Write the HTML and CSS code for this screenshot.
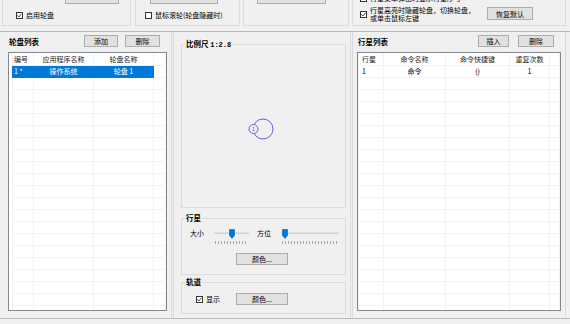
FILE: index.html
```html
<!DOCTYPE html>
<html lang="zh-CN">
<head>
  <meta charset="UTF-8">
  <title>轮盘设置</title>
  <link rel="stylesheet" href="styles.css">
</head>
<body>
  <div class="top">
    <div class="tgrp ga">
      <div class="tbtn"></div>
      <label class="chk">
        <svg class="cb" viewBox="0 0 7 7"><rect x=".5" y=".5" width="6" height="6" fill="#fff" stroke="#333"/><path d="M1.4 3.4l1.5 1.6 2.6-3.2" fill="none" stroke="#333" stroke-width=".9"/></svg>
        启用轮盘
      </label>
    </div>
    <div class="tgrp gb">
      <div class="tbtn"></div>
      <label class="chk">
        <svg class="cb" viewBox="0 0 7 7"><rect x=".5" y=".5" width="6" height="6" fill="#fff" stroke="#333"/></svg>
        鼠标滚轮(轮盘隐藏时)
      </label>
    </div>
    <div class="tgrp gc">
      <div class="tbtn"></div>
    </div>
    <div class="tgrp gd">
      <div class="gd-col">
        <label class="chk cut">
          <svg class="cb" viewBox="0 0 7 7"><rect x=".5" y=".5" width="6" height="6" fill="#fff" stroke="#333"/></svg>
          行星菜单弹出时显示行星序号
        </label>
        <label class="chk two">
          <svg class="cb" viewBox="0 0 7 7"><rect x=".5" y=".5" width="6" height="6" fill="#fff" stroke="#333"/><path d="M1.4 3.4l1.5 1.6 2.6-3.2" fill="none" stroke="#333" stroke-width=".9"/></svg>
          <span>行星高亮时隐藏轮盘，切换轮盘，<br>或单击鼠标左键</span>
        </label>
      </div>
      <button class="btn reset">恢复默认</button>
    </div>
  </div>

  <div class="main">
    <section class="pane left">
      <div class="phead">
        <span class="ptitle">轮盘列表</span>
        <button class="btn add">添加</button>
        <button class="btn del">删除</button>
      </div>
      <div class="list list-l">
        <table>
          <colgroup><col class="c24"><col class="c60"><col class="c60"><col></colgroup>
          <tr class="hd"><td class="l">编号</td><td>应用程序名称</td><td>轮盘名称</td><td></td></tr>
          <tr class="sel"><td class="l">1 *</td><td>操作系统</td><td>轮盘 1</td><td class="nosel"></td></tr>
          <tr><td></td><td></td><td></td><td></td></tr>
          <tr><td></td><td></td><td></td><td></td></tr>
          <tr><td></td><td></td><td></td><td></td></tr>
          <tr><td></td><td></td><td></td><td></td></tr>
          <tr><td></td><td></td><td></td><td></td></tr>
          <tr><td></td><td></td><td></td><td></td></tr>
          <tr><td></td><td></td><td></td><td></td></tr>
          <tr><td></td><td></td><td></td><td></td></tr>
          <tr><td></td><td></td><td></td><td></td></tr>
          <tr><td></td><td></td><td></td><td></td></tr>
          <tr><td></td><td></td><td></td><td></td></tr>
          <tr><td></td><td></td><td></td><td></td></tr>
          <tr><td></td><td></td><td></td><td></td></tr>
          <tr><td></td><td></td><td></td><td></td></tr>
          <tr><td></td><td></td><td></td><td></td></tr>
          <tr><td></td><td></td><td></td><td></td></tr>
          <tr><td></td><td></td><td></td><td></td></tr>
          <tr><td></td><td></td><td></td><td></td></tr>
          <tr><td></td><td></td><td></td><td></td></tr>
          <tr><td></td><td></td><td></td><td></td></tr>
        </table>
      </div>
    </section>

    <div class="split"></div>

    <section class="pane mid">
      <fieldset class="fs-scale">
        <legend>比例尺 <span class="num">1:2.8</span></legend>
        <svg class="canvas" viewBox="0 0 163 157">
          <circle cx="81" cy="80" r="10" fill="none" stroke="#6a5ee0" stroke-width="1"/>
          <circle cx="71.5" cy="80" r="4.5" fill="#f0f0f0" stroke="#6a5ee0" stroke-width="1"/>
          <text x="71.5" y="82.2" font-size="6" text-anchor="middle" fill="#6a5ee0" font-family="Liberation Sans, sans-serif">1</text>
        </svg>
      </fieldset>

      <fieldset class="fs-planet">
        <legend>行星</legend>
        <div class="srow">
          <span class="slabel">大小</span>
          <div class="slider s-size">
            <div class="track"></div>
            <div class="ticks"></div>
            <svg class="thumb t-size" viewBox="0 0 6 10"><path d="M.5 .5h5v6l-2.5 3-2.5-3z" fill="#0078d7" stroke="#0063b1" stroke-width=".6"/></svg>
          </div>
          <span class="slabel gap">方位</span>
          <div class="slider s-dir">
            <div class="track"></div>
            <div class="ticks"></div>
            <svg class="thumb t-dir" viewBox="0 0 6 10"><path d="M.5 .5h5v6l-2.5 3-2.5-3z" fill="#0078d7" stroke="#0063b1" stroke-width=".6"/></svg>
          </div>
        </div>
        <button class="btn color">颜色...</button>
      </fieldset>

      <fieldset class="fs-orbit">
        <legend>轨道</legend>
        <div class="orow">
          <label class="chk">
            <svg class="cb" viewBox="0 0 7 7"><rect x=".5" y=".5" width="6" height="6" fill="#fff" stroke="#333"/><path d="M1.4 3.4l1.5 1.6 2.6-3.2" fill="none" stroke="#333" stroke-width=".9"/></svg>
            显示
          </label>
          <button class="btn color">颜色...</button>
        </div>
      </fieldset>
    </section>

    <div class="split"></div>

    <section class="pane right">
      <div class="phead">
        <span class="ptitle">行星列表</span>
        <button class="btn ins">插入</button>
        <button class="btn del2">删除</button>
      </div>
      <div class="list list-r">
        <table>
          <colgroup><col class="c25"><col class="c62"><col class="c64"><col class="c40"><col></colgroup>
          <tr class="hd"><td class="l">行星</td><td>命令名称</td><td>命令快捷键</td><td>重复次数</td><td></td></tr>
          <tr><td class="l">1</td><td>命令</td><td>{}</td><td>1</td><td></td></tr>
          <tr><td></td><td></td><td></td><td></td><td></td></tr>
          <tr><td></td><td></td><td></td><td></td><td></td></tr>
          <tr><td></td><td></td><td></td><td></td><td></td></tr>
          <tr><td></td><td></td><td></td><td></td><td></td></tr>
          <tr><td></td><td></td><td></td><td></td><td></td></tr>
          <tr><td></td><td></td><td></td><td></td><td></td></tr>
          <tr><td></td><td></td><td></td><td></td><td></td></tr>
          <tr><td></td><td></td><td></td><td></td><td></td></tr>
          <tr><td></td><td></td><td></td><td></td><td></td></tr>
          <tr><td></td><td></td><td></td><td></td><td></td></tr>
          <tr><td></td><td></td><td></td><td></td><td></td></tr>
          <tr><td></td><td></td><td></td><td></td><td></td></tr>
          <tr><td></td><td></td><td></td><td></td><td></td></tr>
          <tr><td></td><td></td><td></td><td></td><td></td></tr>
          <tr><td></td><td></td><td></td><td></td><td></td></tr>
          <tr><td></td><td></td><td></td><td></td><td></td></tr>
          <tr><td></td><td></td><td></td><td></td><td></td></tr>
          <tr><td></td><td></td><td></td><td></td><td></td></tr>
          <tr><td></td><td></td><td></td><td></td><td></td></tr>
          <tr><td></td><td></td><td></td><td></td><td></td></tr>
        </table>
      </div>
    </section>
  </div>
</body>
</html>
```

FILE: styles.css
```css
* {
  box-sizing: border-box;
}
body {
  margin: 0;
  width: 570px;
  height: 324px;
  overflow: hidden;
  background: #f0f0f0;
  color: #000;
  font: 7px/9px "Noto Sans CJK SC", "Liberation Sans", sans-serif;
}

/* top strip, cut off at the window edge */
.top {
  display: flex;
  height: 32px;
  padding-left: 2px;
  border-bottom: 1px solid #b9b9b9;
}
.tgrp {
  height: 26px;
  display: flex;
  flex-direction: column;
  border: 1px solid #dcdcdc;
  border-top: none;
}
.ga { width: 129px; padding-left: 13px; }
.gb { width: 105px; margin-left: 4px; padding-left: 9px; }
.gc { width: 106px; margin-left: 3px; }
.gd { width: 214px; margin-left: 3px; padding-left: 7px; flex-direction: row; }
.tbtn {
  height: 4px;
  background: #e1e1e1;
  border: 1px solid #adadad;
  border-top: none;
}
.ga .tbtn { width: 54px; margin-left: 49px; }
.gb .tbtn { width: 68px; margin-left: 5px; }
.gc .tbtn { width: 69px; margin-left: 13px; }
.chk {
  display: flex;
  align-items: center;
  gap: 3px;
  height: 9px;
  white-space: nowrap;
}
.tgrp > .chk { margin-top: 7px; }
.cb {
  width: 7px;
  height: 7px;
  flex: none;
}
.gd-col {
  display: flex;
  flex-direction: column;
}
.chk.cut {
  height: 8px;
  margin-top: -6px;
  line-height: 8px;
  overflow: hidden;
}
.chk.two {
  height: 16px;
  margin-top: 4px;
  line-height: 8px;
}
.btn {
  height: 12px;
  padding: 0;
  border: 1px solid #adadad;
  background: #e1e1e1;
  color: #000;
  font: inherit;
  line-height: 10px;
  text-align: center;
}
.reset {
  width: 46px;
  height: 13px;
  margin: 7px 32px 0 auto;
}

/* main panes */
.main {
  display: flex;
  height: 287px;
  border-bottom: 1px solid #b9b9b9;
}
.pane {
  display: flex;
  flex-direction: column;
}
.split {
  width: 3px;
  border-left: 1px solid #dadada;
  border-right: 1px solid #dadada;
}
.left { width: 171px; padding: 3px 0 0 8px; }
.mid { width: 176px; padding: 7px 4px 0 7px; }
.right { width: 213px; padding: 3px 0 0 4px; border-right: 1px solid #dadada; }
.phead {
  display: flex;
  align-items: center;
  height: 12px;
}
.ptitle {
  font-weight: bold;
  font-size: 7.5px;
  padding-left: 1px;
}
.add { width: 34px; margin-left: auto; }
.del { width: 35px; margin: 0 11px 0 7px; }
.ins { width: 31px; margin-left: auto; }
.del2 { width: 36px; margin: 0 11px 0 9px; }

.list {
  margin-top: 5px;
  height: 259px;
  overflow: hidden;
  background: #fff;
  border: 1px solid #828790;
}
.list-l { width: 159px; padding-left: 3px; }
.list-r { width: 204px; }
.list table {
  width: 100%;
  border-collapse: collapse;
  table-layout: fixed;
}
.c24 { width: 21px; }
.c60 { width: 60px; }
.c25 { width: 25px; }
.c62 { width: 62px; }
.c64 { width: 64px; }
.c40 { width: 40px; }
.list td {
  height: 12px;
  padding: 0;
  text-align: center;
  white-space: nowrap;
  overflow: hidden;
  border: 1px solid #f2f2f2;
  line-height: 10px;
}
.list tr:first-child td { border-top: none; }
.list td.l {
  text-align: left;
  padding-left: 3px;
}
.list-l td.l { padding-left: 1px; }
.hd td { color: #1e1e1e; }
.sel td {
  background: #0078d7;
  color: #fff;
  border-color: #0078d7;
}
.sel td.nosel {
  background: #fff;
  border-color: #f2f2f2;
}

/* group boxes in the middle */
fieldset {
  margin: 0;
  padding: 0;
  min-width: 0;
  border: 1px solid #dcdcdc;
}
legend {
  margin-left: 3px;
  padding: 0 1px;
  height: 10px;
  line-height: 10px;
  font-weight: bold;
  font-size: 7.5px;
}
.num {
  font-family: "Liberation Mono", monospace;
  font-size: 7px;
}
.fs-scale { height: 169px; }
.canvas {
  display: block;
  width: 163px;
  height: 157px;
}
.fs-planet {
  height: 62px;
  margin-top: 5px;
}
.fs-orbit {
  height: 37px;
  margin-top: 2px;
}
.srow {
  display: flex;
  margin-top: 5px;
  padding-left: 8px;
}
.slabel {
  width: 24px;
  line-height: 10px;
}
.slabel.gap { margin-left: 8px; }
.slider {
  position: relative;
  height: 17px;
}
.s-size { width: 35px; }
.s-dir { width: 58px; }
.track {
  margin-top: 4px;
  height: 2px;
  background: #e2e2e2;
  border-bottom: 1px solid #d2d2d2;
}
.ticks {
  margin: 7px 1px 0;
  height: 3px;
  background: repeating-linear-gradient(90deg, #a8a8a8 0 1px, transparent 1px 3px);
}
.thumb {
  position: absolute;
  top: 1px;
  width: 6px;
  height: 10px;
}
.t-size { left: 15px; }
.t-dir { left: 1px; }
.fs-planet .color {
  display: block;
  width: 52px;
  margin: 8px 0 0 54px;
}
.orow {
  display: flex;
  align-items: center;
  margin-top: 6px;
  padding-left: 14px;
}
.orow .chk { width: 40px; }
.orow .color { width: 52px; }
```
